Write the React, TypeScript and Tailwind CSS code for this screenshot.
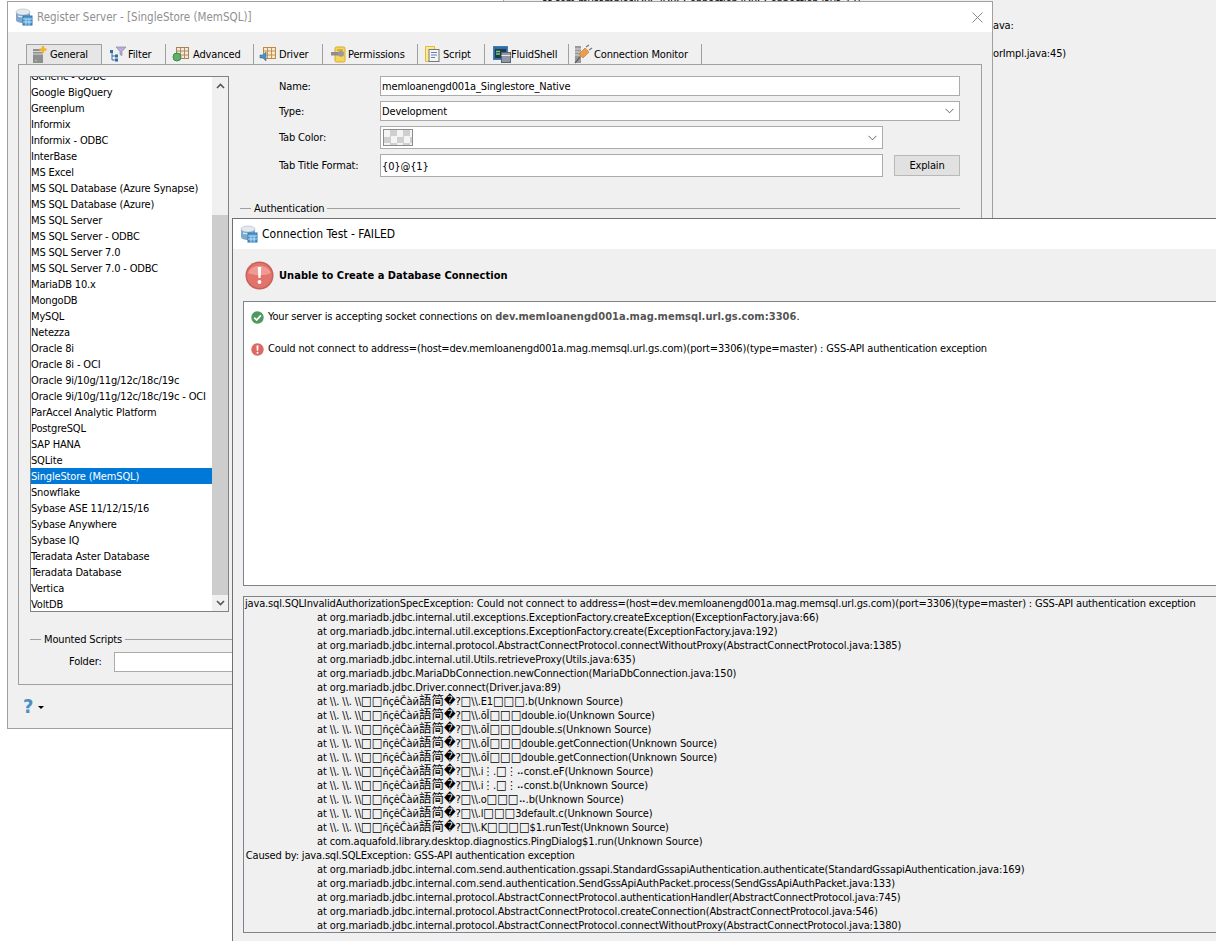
import React from "react";

const drivers = ["Generic - ODBC","Google BigQuery","Greenplum","Informix","Informix - ODBC","InterBase","MS Excel","MS SQL Database (Azure Synapse)","MS SQL Database (Azure)","MS SQL Server","MS SQL Server - ODBC","MS SQL Server 7.0","MS SQL Server 7.0 - ODBC","MariaDB 10.x","MongoDB","MySQL","Netezza","Oracle 8i","Oracle 8i - OCI","Oracle 9i/10g/11g/12c/18c/19c","Oracle 9i/10g/11g/12c/18c/19c - OCI","ParAccel Analytic Platform","PostgreSQL","SAP HANA","SQLite","SingleStore (MemSQL)","Snowflake","Sybase ASE 11/12/15/16","Sybase Anywhere","Sybase IQ","Teradata Aster Database","Teradata Database","Vertica","VoltDB"];

const g = "\\\\. \\\\. \\\\□□ñçêČàй語简�?□\\\\.";
const log: [boolean, string][] = [
[false,"java.sql.SQLInvalidAuthorizationSpecException: Could not connect to address=(host=dev.memloanengd001a.mag.memsql.url.gs.com)(port=3306)(type=master) : GSS-API authentication exception"],
[true,"at org.mariadb.jdbc.internal.util.exceptions.ExceptionFactory.createException(ExceptionFactory.java:66)"],
[true,"at org.mariadb.jdbc.internal.util.exceptions.ExceptionFactory.create(ExceptionFactory.java:192)"],
[true,"at org.mariadb.jdbc.internal.protocol.AbstractConnectProtocol.connectWithoutProxy(AbstractConnectProtocol.java:1385)"],
[true,"at org.mariadb.jdbc.internal.util.Utils.retrieveProxy(Utils.java:635)"],
[true,"at org.mariadb.jdbc.MariaDbConnection.newConnection(MariaDbConnection.java:150)"],
[true,"at org.mariadb.jdbc.Driver.connect(Driver.java:89)"],
[true,"at "+g+"E1□□□.b(Unknown Source)"],
[true,"at "+g+"ōǏ□□□double.io(Unknown Source)"],
[true,"at "+g+"ōǏ□□□double.s(Unknown Source)"],
[true,"at "+g+"ōǏ□□□double.getConnection(Unknown Source)"],
[true,"at "+g+"ōǏ□□□double.getConnection(Unknown Source)"],
[true,"at "+g+"i⋮.□⋮⠤const.eF(Unknown Source)"],
[true,"at "+g+"i⋮.□⋮⠤const.b(Unknown Source)"],
[true,"at "+g+"o□□□⠤.b(Unknown Source)"],
[true,"at "+g+"l□□□3default.c(Unknown Source)"],
[true,"at "+g+"K□□□□$1.runTest(Unknown Source)"],
[true,"at com.aquafold.library.desktop.diagnostics.PingDialog$1.run(Unknown Source)"],
[false,"\u200aCaused by: java.sql.SQLException: GSS-API authentication exception"],
[true,"at org.mariadb.jdbc.internal.com.send.authentication.gssapi.StandardGssapiAuthentication.authenticate(StandardGssapiAuthentication.java:169)"],
[true,"at org.mariadb.jdbc.internal.com.send.authentication.SendGssApiAuthPacket.process(SendGssApiAuthPacket.java:133)"],
[true,"at org.mariadb.jdbc.internal.protocol.AbstractConnectProtocol.authenticationHandler(AbstractConnectProtocol.java:745)"],
[true,"at org.mariadb.jdbc.internal.protocol.AbstractConnectProtocol.createConnection(AbstractConnectProtocol.java:546)"],
[true,"at org.mariadb.jdbc.internal.protocol.AbstractConnectProtocol.connectWithoutProxy(AbstractConnectProtocol.java:1380)"],
];

function LogText({ text }: { text: string }) {
  return (
    <>
      {text.split(/(□+|語简�)/).map((part, i) =>
        /[□語简�]/.test(part)
          ? <span key={i} className="text-[12.5px] leading-none tracking-normal">{part}</span>
          : <React.Fragment key={i}>{part}</React.Fragment>
      )}
    </>
  );
}

function AppIcon() {
  return (
    <svg width="18" height="18" viewBox="0 0 18 18">
      <path d="M1 4v8c0 1.600 3 3 7 3s7-1.400 7-3V4" fill="#7fa6cc" />
      <ellipse cx="8" cy="4" rx="7" ry="3" fill="#e3e9ef" stroke="#a8b9ca" strokeWidth=".6" />
      <path d="M3 8c3 1.200 7 1.200 10 0" stroke="#fff" fill="none" />
      <rect x="8" y="8" width="9" height="9" fill="#4f9bd4" stroke="#2f76ad" />
      <path d="M8 11h9M8 14h9M11 11v6M14 11v6" stroke="#d6ecfb" strokeWidth=".8" />
    </svg>
  );
}
function GeneralIcon() {
  return (
    <svg width="18" height="18" viewBox="0 0 18 18">
      <rect x="3" y="3" width="10" height="14" fill="#8f8f8f" />
      <path d="M3 5.500h10M3 8h10" stroke="#d8d8d8" />
      <rect x="5" y="14" width="2" height="1" fill="#7ee08a" />
      <path d="M13 0v7M9.500 3.500h7" stroke="#f3b32a" strokeWidth="2.400" />
    </svg>
  );
}
function FilterIcon() {
  return (
    <svg width="18" height="16" viewBox="0 0 18 16">
      <path d="M7 1h10l-4 4.500v4l-2-1v-3z" fill="#b9aedb" stroke="#8a86a8" strokeWidth=".7" />
      <path d="M3 6v8h4M3 10h4" stroke="#3f6f9f" fill="none" />
      <rect x="1" y="4" width="3" height="3" fill="#2f6ea5" />
      <rect x="6" y="8.500" width="3" height="3" fill="#2f6ea5" />
      <rect x="6" y="12.500" width="3" height="3" fill="#2f6ea5" />
    </svg>
  );
}
function TableIcon({ colour }: { colour: string }) {
  return (
    <g>
      <rect x="4.500" y="1.500" width="12" height="11" fill="#f5ead8" stroke={colour} />
      <path d="M4.500 5h12M4.500 9h12M8.500 1.500v11M12.500 1.500v11" stroke={colour} strokeWidth=".9" />
    </g>
  );
}
function AdvancedIcon() {
  return (
    <svg width="18" height="16" viewBox="0 0 18 16">
      <TableIcon colour="#a8825a" />
      <circle cx="5" cy="11" r="4" fill="#5fae6b" stroke="#3d8a4c" />
    </svg>
  );
}
function DriverIcon() {
  return (
    <svg width="18" height="16" viewBox="0 0 18 16">
      <TableIcon colour="#c08a3e" />
      <path d="M1 9h3l3-3v9l-3-3H1z" fill="#4f8fc7" stroke="#2f6ea5" strokeWidth=".6" />
    </svg>
  );
}
function PermissionsIcon() {
  return (
    <svg width="18" height="17" viewBox="0 0 18 17">
      <rect x="5" y="1" width="10" height="15" rx="1.500" fill="#f6d55c" stroke="#d8aa2c" />
      <rect x="1" y="6" width="12" height="3.500" fill="#8d8d8d" />
      <circle cx="11" cy="7.800" r="3" fill="#9a9a9a" />
      <path d="M7 4h6" stroke="#b98d20" />
    </svg>
  );
}
function ScriptIcon() {
  return (
    <svg width="16" height="18" viewBox="0 0 16 18">
      <path d="M1.500 1.500h9v15h-9z" fill="#fbe89a" stroke="#e0bc3a" />
      <rect x="5" y="4.500" width="10" height="12" fill="#f4f4f4" stroke="#777" />
      <path d="M7 7.500h6M7 10h6M7 12.500h4" stroke="#5b84ac" />
    </svg>
  );
}
function ShellIcon() {
  return (
    <svg width="18" height="17" viewBox="0 0 18 17">
      <rect x=".5" y=".5" width="14" height="13" fill="#2f6ea5" stroke="#3e7fb8" />
      <rect x="2" y="3" width="11" height="9" fill="#25384a" />
      <path d="M3 5.500h4M3 8h4" stroke="#6fd27e" strokeWidth="1.400" />
      <rect x="8.500" y="6.500" width="9" height="10" fill="#8e99a5" stroke="#58636e" />
      <path d="M8.500 9.500h9" stroke="#e4e8ec" />
    </svg>
  );
}
function MonitorIcon() {
  return (
    <svg width="20" height="20" viewBox="0 0 20 20">
      <rect x="1" y="2" width="6" height="17" fill="#9a9a9a" />
      <path d="M1 5h6M1 8h6M1 11h6" stroke="#dcdcdc" />
      <path d="M5 10l6-6 4 4-6 6z" fill="#ee9d4e" stroke="#c97728" strokeWidth=".7" />
      <path d="M12 3l3-2M15 6l3-2" stroke="#777" strokeWidth="1.300" />
      <path d="M6 13l-5 6" stroke="#666" strokeWidth="1.500" />
    </svg>
  );
}
function BigError() {
  return (
    <svg width="29" height="29" viewBox="0 0 29 29">
      <circle cx="14.500" cy="14.500" r="14" fill="#c9605a" />
      <circle cx="14.500" cy="14.500" r="12.500" fill="#e2746c" />
      <path d="M3 12a12 10 0 0 1 23 0c-6 3-16 3-23 0z" fill="#ef9a93" />
      <path d="M12.800 6h3.400l-.6 11h-2.200z" fill="#fff" />
      <circle cx="14.500" cy="21" r="1.900" fill="#fff" />
    </svg>
  );
}
function SmallError() {
  return (
    <svg width="13" height="13" viewBox="0 0 13 13" className="shrink-0">
      <circle cx="6.500" cy="6.500" r="6.200" fill="#dd6a62" />
      <path d="M5.500 2.500h2l-.3 5.200h-1.400z" fill="#fff" />
      <circle cx="6.500" cy="9.700" r="1" fill="#fff" />
    </svg>
  );
}
function SmallOk() {
  return (
    <svg width="13" height="13" viewBox="0 0 13 13" className="shrink-0">
      <circle cx="6.500" cy="6.500" r="6.200" fill="#4f9a5c" />
      <path d="M3.200 6.600l2.400 2.500 4.300-4.700" fill="none" stroke="#fff" strokeWidth="1.700" />
    </svg>
  );
}
function Chevron({ up }: { up?: boolean }) {
  return (
    <svg width="9" height="6" viewBox="0 0 9 6">
      <path d={up ? "M1 5l3.500-3.500L8 5" : "M1 1l3.500 3.500L8 1"} fill="none" stroke="#555" strokeWidth="1.600" />
    </svg>
  );
}
function ComboArrow() {
  return (
    <svg width="9" height="6" viewBox="0 0 9 6" className="shrink-0">
      <path d="M.5 .8l4 4 4-4" fill="none" stroke="#555" strokeWidth=".9" />
    </svg>
  );
}
function Tab({ icon, label, w, active }: { icon: React.ReactNode; label: string; w: string; active?: boolean }) {
  return (
    <div className={active
      ? "flex items-center h-[20px] bg-[#e6e6e6] border border-b-0 border-[#a0a0a0] " + w
      : "flex items-center h-[20px] border-r border-[#a0a0a0] " + w}>
      {icon}
      <span className="whitespace-nowrap pt-[2px]">{label}</span>
    </div>
  );
}
function GroupLine({ label, gap }: { label: string; gap: string }) {
  return (
    <div className="flex items-center">
      <div className={"h-px bg-[#a0a0a0] " + gap} />
      <span className="mx-[3px] whitespace-nowrap pt-[2px]">{label}</span>
      <div className="h-px bg-[#a0a0a0] flex-1" />
    </div>
  );
}

export default function App() {
  return (
    <div className="relative w-[1216px] h-[941px] overflow-hidden bg-white text-black text-[11px] tracking-[-0.16px] [font-family:'DejaVu_Sans_Condensed','DejaVu_Sans','Noto_Sans_CJK_SC',sans-serif]">
      {/* window behind everything */}
      <div className="absolute left-[503px] top-0 w-[713px] h-[218px] bg-[#f0f0f0] border-l border-[#a0a0a0]">
        <div className="absolute left-[38px] top-[-5px] whitespace-nowrap">at com.mysamplesJDBC.JDBCConnection.JDBCConnection.java:17)</div>
        <div className="absolute left-[489px] top-[18px] whitespace-nowrap">ava:</div>
        <div className="absolute left-[489px] top-[46px] whitespace-nowrap">orImpl.java:45)</div>
      </div>

      {/* Register Server */}
      <div className="absolute left-[7px] top-[1px] w-[986px] h-[728px] border border-[#a0a0a0] bg-[#f0f0f0]">
        <div className="flex items-center h-[30px] bg-white pl-[7px] pr-[9px] text-[#8f8f8f]">
          <AppIcon />
          <span className="ml-[4px] flex-1 text-[11.5px] tracking-normal pt-[2px]">Register Server - [SingleStore (MemSQL)]</span>
          <svg width="11" height="11" viewBox="0 0 11 11"><path d="M.5 .5l10 10M10.500 .5l-10 10" stroke="#8a8a8a" /></svg>
        </div>
        <div className="flex pl-[18px] pt-[12px]">
          <Tab active w="w-[76px] pl-[3px] gap-[2px]" icon={<GeneralIcon />} label="General" />
          <Tab w="w-[64px] pl-[7px] gap-[1px]" icon={<FilterIcon />} label="Filter" />
          <Tab w="w-[88px] pl-[6px] gap-[3px]" icon={<AdvancedIcon />} label="Advanced" />
          <Tab w="w-[69px] pl-[5px] gap-[2px]" icon={<DriverIcon />} label="Driver" />
          <Tab w="w-[95px] pl-[7px]" icon={<PermissionsIcon />} label="Permissions" />
          <Tab w="w-[67px] pl-[6px] gap-[3px]" icon={<ScriptIcon />} label="Script" />
          <Tab w="w-[84px] pl-[8px]" icon={<ShellIcon />} label="FluidShell" />
          <Tab w="w-[133px] pl-[5px]" icon={<MonitorIcon />} label="Connection Monitor" />
        </div>
        <div className="ml-[10px] w-[964px] h-[621px] border border-[#a0a0a0] bg-[#f0f0f0] flex flex-col">
          <div className="flex h-[548px] pt-[11px]">
            <div className="ml-[11px] w-[199px] h-[536px] border border-[#7c838a] bg-white flex overflow-hidden">
              <div className="flex-1 min-w-0 -mt-[9px]">
                {drivers.map((d) => (
                  <div key={d} className={d === "SingleStore (MemSQL)"
                    ? "h-[16px] leading-[15px] pt-[1px] whitespace-nowrap bg-[#0078d7] text-white"
                    : "h-[16px] leading-[15px] pt-[1px] whitespace-nowrap"}>{d}</div>
                ))}
              </div>
              <div className="w-[16px] bg-[#f0f0f0] flex flex-col items-center">
                <div className="h-[17px] flex items-center justify-center"><Chevron up /></div>
                <div className="h-[121px]" />
                <div className="h-[380px] w-full bg-[#cdcdcd]" />
                <div className="h-[16px] flex items-center justify-center"><Chevron /></div>
              </div>
            </div>
            <div className="ml-[11px] w-[720px]">
              <div className="flex items-center h-[20px] pl-[39px]">
                <span className="w-[101px] pt-[2px]">Name:</span>
                <div className="w-[580px] h-full border border-[#ababab] bg-white pl-[1px] leading-[20px]">memloanengd001a_Singlestore_Native</div>
              </div>
              <div className="flex items-center h-[20px] mt-[5px] pl-[39px]">
                <span className="w-[101px] pt-[2px]">Type:</span>
                <div className="flex items-center justify-between w-[580px] h-full border border-[#ababab] bg-white pl-[1px] pr-[5px]"><span className="pt-[2px]">Development</span><ComboArrow /></div>
              </div>
              <div className="flex items-center h-[23px] mt-[5px] pl-[39px]">
                <span className="w-[101px] pt-[2px]">Tab Color:</span>
                <div className="flex items-center justify-between w-[503px] h-full border border-[#ababab] bg-white pl-[2px] pr-[5px]">
                  <div className="w-[30px] h-[17px] border border-[#8c8c8c] [background-image:repeating-conic-gradient(#cfcfcf_0%_25%,#f4f4f4_0%_50%)] [background-size:13px_13px]" />
                  <ComboArrow />
                </div>
              </div>
              <div className="flex items-center h-[23px] mt-[5px] pl-[39px]">
                <span className="w-[101px] pt-[2px]">Tab Title Format:</span>
                <div className="w-[503px] h-full border border-[#ababab] bg-white pl-[1px] leading-[23px]">{"{0}@{1}"}</div>
                <div className="ml-[11px] w-[66px] h-[21px] border border-[#b8b8b8] bg-[#e1e1e1] flex items-center justify-center"><span className="pt-[2px]">Explain</span></div>
              </div>
              <div className="mt-[22px]"><GroupLine label="Authentication" gap="w-[11px]" /></div>
            </div>
          </div>
          <div className="ml-[11px] mt-[17px]"><GroupLine label="Mounted Scripts" gap="w-[11px]" /></div>
          <div className="flex items-center h-[20px] mt-[3px] ml-[50px]">
            <span className="w-[45px] pt-[2px]">Folder:</span>
            <div className="w-[400px] h-full border border-[#ababab] bg-white" />
          </div>
        </div>
        <div className="flex items-center pl-[15px] pt-[9px] gap-[5px]">
          <span className="text-[20px] leading-[24px] font-bold text-[#4a90c4]">?</span>
          <div className="w-0 h-0 border-x-[3px] border-x-transparent border-t-[3px] border-t-black mt-[3px]" />
        </div>
      </div>

      {/* Connection Test */}
      <div className="absolute left-[232px] top-[218px] w-[1000px] h-[740px] border border-[#707070] bg-[#f0f0f0]">
        <div className="flex items-center h-[30px] bg-white pl-[7px] gap-[4px] text-[12px] tracking-normal">
          <AppIcon />
          <span>Connection Test - FAILED</span>
        </div>
        <div className="flex items-center h-[52px] pl-[12px] gap-[5px]">
          <BigError />
          <span className="font-bold tracking-[0.05px] pt-[2px]">Unable to Create a Database Connection</span>
        </div>
        <div className="ml-[10px] h-[285px] border border-[#7c838a] bg-white pt-[7px] pl-[7px]">
          <div className="flex items-center gap-[4px] h-[16px]">
            <SmallOk />
            <span>Your server is accepting socket connections on <b className="text-[#555] tracking-[0.05px]">dev.memloanengd001a.mag.memsql.url.gs.com:3306</b>.</span>
          </div>
          <div className="flex items-center gap-[4px] h-[16px] mt-[16px]">
            <SmallError />
            <span>Could not connect to address=(host=dev.memloanengd001a.mag.memsql.url.gs.com)(port=3306)(type=master) : GSS-API authentication exception</span>
          </div>
        </div>
        <div className="ml-[10px] mt-[10px] h-[337px] border border-[#7c838a] pl-[1px]">
          {log.map(([indent, t], i) => (
            <div key={i} className={indent ? "h-[14px] leading-[14px] pl-[72px] whitespace-pre tracking-[-0.12px]" : "h-[14px] leading-[14px] whitespace-pre"}><LogText text={t} /></div>
          ))}
        </div>
      </div>
    </div>
  );
}
